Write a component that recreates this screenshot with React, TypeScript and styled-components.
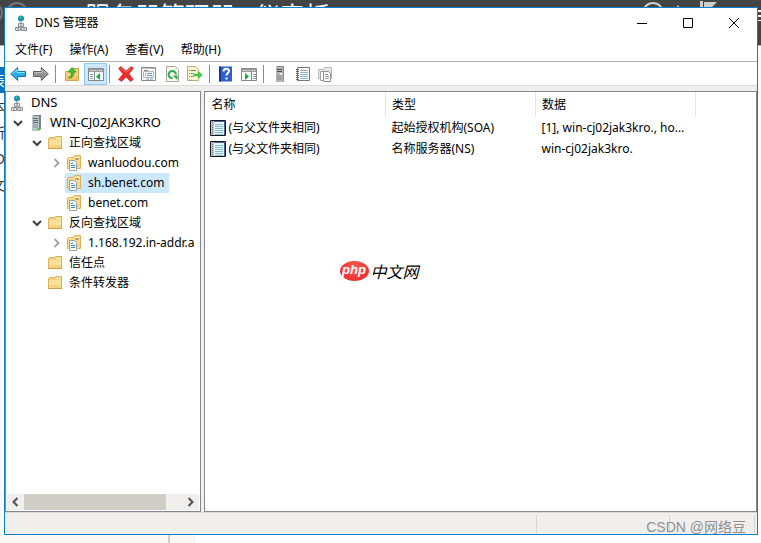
import React from "react";
import styled, { createGlobalStyle, css } from "styled-components";

const GlobalStyle = createGlobalStyle`
  * { box-sizing: border-box; }
  body { margin: 0; background: #fff; overflow: hidden; }
  body, button, table {
    font-family: "Noto Sans", "Noto Sans CJK SC", sans-serif;
    font-size: 12px;
    color: #000;
  }
  button { border: 0; background: none; padding: 0; margin: 0; }
`;

/* ---------- desktop behind the window ---------- */

const Desktop = styled.div`
  position: relative;
  display: flex;
  min-height: 100vh;
  padding: 7px 3px 8px 4px;
`;

const Backdrop = styled.div`
  position: absolute;
  inset: 0;
  display: flex;
  flex-direction: column;
  overflow: hidden;
  background: #fff;
`;

const BackdropHeader = styled.div`
  display: flex;
  align-items: flex-start;
  justify-content: space-between;
  height: 46px;
  flex: none;
  background: #444;
  color: #fff;
  border-bottom: 1px solid #aaa;
`;

const BackdropTitle = styled.div`
  display: flex;
  gap: 56px;
  font-size: 25px;
  line-height: 30px;
  white-space: nowrap;
`;

const BackdropBody = styled.div`
  display: flex;
  flex: 1;
`;

const Rail = styled.div`
  width: 170px;
  padding-top: 21px;
  background: #f9f8f7;
  border-right: 2px solid #d0cdca;
`;

const RailItem = styled.div<{ $active?: boolean }>`
  display: flex;
  justify-content: flex-end;
  align-items: center;
  width: 5px;
  height: 26px;
  overflow: hidden;
  font-size: 14px;
  color: ${(p) => (p.$active ? "#fff" : "#333")};
  background: ${(p) => (p.$active ? "#0a72c0" : "#fff")};
`;

const RailShade = styled.div`
  width: 26px;
  background: #f9f8f7;
`;

/* ---------- window ---------- */

const Window = styled.main`
  position: relative;
  flex: 1;
  min-width: 0;
  display: flex;
  flex-direction: column;
  background: #fff;
  border: 1px solid #0a7fcb;
`;

const TitleBar = styled.header`
  display: flex;
  align-items: center;
  height: 30px;
  padding-left: 8px;
`;

const Title = styled.h1`
  flex: 1;
  margin: 0 0 0 6px;
  font-size: 12px;
  font-weight: 400;
  line-height: 20px;
`;

const CaptionButton = styled.button`
  display: flex;
  align-items: center;
  justify-content: center;
  width: 46px;
  height: 30px;
`;

const MenuBar = styled.nav`
  display: flex;
  gap: 17px;
  height: 24px;
  padding: 0 10px;
  border-bottom: 1px solid #aeaeae;
`;

const MenuButton = styled.button`
  line-height: 23px;
`;

const Toolbar = styled.div`
  display: flex;
  align-items: center;
  height: 24px;
  padding-left: 2px;
  border-bottom: 1px solid #dcdcdc;
`;

const ToolButton = styled.button<{ $pressed?: boolean }>`
  display: flex;
  align-items: center;
  width: 23px;
  height: 22px;
  padding-left: 3px;
  ${(p) =>
    p.$pressed &&
    css`
      background: #cce8ff;
      border: 1px solid #90c8f6;
    `}
`;

const Separator = styled.span`
  width: 1px;
  height: 18px;
  margin: 0 5px 0 2px;
  background: #8c8c8c;
`;

const Body = styled.div`
  flex: 1;
  display: flex;
  gap: 3px;
  min-height: 0;
  padding-top: 5px;
  background: #f0efee;
`;

const Pane = styled.section`
  display: flex;
  flex-direction: column;
  min-width: 0;
  background: #fff;
  border: 1px solid #828790;
`;

const TreePane = styled(Pane)`
  width: 26%;
  flex: none;
`;

const ListPane = styled(Pane)`
  flex: 1;
  position: relative;
`;

/* ---------- tree ---------- */

const Tree = styled.ul`
  flex: 1;
  margin: 0;
  padding: 1px 0 0;
  list-style: none;
  overflow: hidden;
`;

const TreeRow = styled.li<{ $level: number }>`
  display: flex;
  height: 20px;
  padding-left: ${(p) => (p.$level === 0 ? 2 : p.$level * 19 - 15)}px;
`;

const Expander = styled.button`
  display: flex;
  flex: none;
  align-items: center;
  justify-content: center;
  width: 17px;
  padding-right: 2px;
`;

const ExpanderSpace = styled.span`
  flex: none;
  width: 17px;
`;

const Node = styled.button<{ $selected?: boolean }>`
  display: flex;
  align-items: center;
  gap: 6px;
  padding: 0 4px 0 1px;
  white-space: nowrap;
  background: ${(p) => (p.$selected ? "#cce8ff" : "transparent")};
`;

const NodeLabel = styled.span<{ $large: boolean }>`
  font-size: ${(p) => (p.$large ? 13 : 12)}px;
  line-height: ${(p) => (p.$large ? 18 : 20)}px;
  padding-bottom: ${(p) => (p.$large ? 2 : 0)}px;
`;

const ScrollBar = styled.div`
  display: flex;
  height: 16px;
  margin: 0 1px 1px;
  background: #f0efee;
`;

const ScrollButton = styled.button`
  display: flex;
  align-items: center;
  justify-content: center;
  width: 17px;
`;

const ScrollTrack = styled.div`
  flex: 1;
  display: flex;
`;

const ScrollThumb = styled.div`
  width: 90%;
  background: #d0cdc7;
`;

/* ---------- record list ---------- */

const Records = styled.table`
  width: 100%;
  table-layout: fixed;
  border-collapse: collapse;
`;

const HeadCell = styled.th<{ $width?: number }>`
  width: ${(p) => (p.$width ? `${p.$width}px` : "auto")};
  height: 25px;
  padding: 0 6px 1px;
  font-weight: 400;
  text-align: left;
  border-right: ${(p) => (p.$width ? "1px solid #e5e5e5" : "0")};
  &:first-child { padding-left: 7px; }
`;

const Cell = styled.td`
  height: 21px;
  padding: 0 6px;
  line-height: 20px;
  overflow: hidden;
  text-overflow: ellipsis;
  white-space: nowrap;
`;

const NameCell = styled.span`
  display: flex;
  align-items: center;
  gap: 3px;
  margin-left: -1px;
`;

const Logo = styled.div`
  position: absolute;
  left: 135px;
  top: 169px;
  display: flex;
  align-items: center;
  gap: 2px;
`;

const LogoBadge = styled.span`
  width: 29px;
  height: 20px;
  border-radius: 50%;
  background: radial-gradient(ellipse at 50% 30%, #ff5a50, #e8202a);
  color: #fff;
  font: italic bold 13px/18px "Liberation Sans", sans-serif;
  text-align: center;
`;

const LogoText = styled.span`
  font: italic 400 16px/20px "Noto Sans CJK SC", sans-serif;
`;

/* ---------- status bar ---------- */

const StatusBar = styled.footer`
  display: flex;
  height: 22px;
  padding: 2px 2px 1px 0;
  background: #f0efee;
  border-top: 1px solid #d9d7d3;
`;

const StatusCell = styled.span<{ $width?: number }>`
  ${(p) => (p.$width ? `width: ${p.$width}px;` : "flex: 1;")}
  border-right: 1px solid #d5d3ce;
`;

const Watermark = styled.div`
  position: absolute;
  right: 11px;
  bottom: -4px;
  font: 14px/22px "Liberation Sans", "Noto Sans CJK SC", sans-serif;
  color: #8f8f8f;
`;

/* ---------- icons ---------- */

const Glyph = styled.svg`
  display: block;
  flex: none;
`;

const Svg = ({ w = 16, h = 16, children }: { w?: number; h?: number; children: React.ReactNode }) => (
  <Glyph width={w} height={h} viewBox={`0 0 ${w} ${h}`} aria-hidden="true">
    {children}
  </Glyph>
);

const DnsIcon = () => (
  <Svg>
    <circle cx="8" cy="3.500" r="3" fill="#1687c4" />
    <path d="M6 2l2-1 1 2-2 1zM8 5h2v1H8z" fill="#35cf62" />
    <path d="M8 6.500v2" stroke="#777" />
    <path d="M5.500 8.500h5v3h-5zM2.500 12.500h5v3h-5zM8.500 12.500h5v3h-5z" fill="#e3e6e8" stroke="#8b9298" />
    <path d="M4 14h2M10 14h2M7 10h2" stroke="#888" />
  </Svg>
);

const ServerIcon = () => (
  <Svg>
    <path d="M4 1l2-1h7v14l-2 2H4z" fill="#79858b" />
    <path d="M4 1h7v15H4z" fill="#b9c4c8" />
    <path d="M5 3.500h5M5 5.500h5M5 7.500h5" stroke="#5f6b72" />
    <path d="M5 9h5v4H5z" fill="#a2adb2" />
    <path d="M9 13h2v2H9z" fill="#5bdf35" />
  </Svg>
);

const FolderIcon = () => (
  <Svg>
    <path d="M1.500 3.500l1-1h5l1-1h6v12h-13z" fill="#f4d07a" stroke="#dcb15c" />
    <path d="M2 5h12v8H2z" fill="#fae09a" />
    <path d="M2 10h12v3H2z" fill="#f6d383" />
    <path d="M9 3.500h5" stroke="#fff3c8" />
    <path d="M1 13.500h14" stroke="#cfa04a" />
  </Svg>
);

const ZoneIcon = () => (
  <Svg>
    <path d="M1.500 3.500l1-1h5l1-2h6v13h-13z" fill="#f9dc92" stroke="#dcb15c" />
    <path d="M9 2.500h4" stroke="#fff3c8" />
    <path d="M9 4h4" stroke="#946e45" />
    <path d="M10 8h4v5h-4z" fill="#f6d383" />
    <path d="M3.500 5.500h5l2 2v8h-7z" fill="#fff" stroke="#93a2ae" />
    <path d="M5 8.500h2M5 10.500h4M5 12.500h4" stroke="#2a86d0" />
  </Svg>
);

const RecordIcon = () => (
  <Svg>
    <path d="M.5.5h15v15H.5z" fill="#e9f6fc" stroke="#15171f" />
    <path d="M13.500 1v14" stroke="#fff" />
    <path d="M14.500 1v14M4 1.500h11" stroke="#4a5f9c" />
    <path d="M1 1h3v14H1z" fill="#c4c4c4" />
    <path d="M2.500 1v14" stroke="#7a7a7a" strokeDasharray="1 1" />
    <path d="M5 4.500h8M5 6.500h8M5 8.500h8M5 10.500h8M5 12.500h8M5 14.500h8" stroke="#7fb9d0" />
  </Svg>
);

const BackIcon = () => (
  <Svg>
    <path d="M.7 8l7-6.500v4h7.800v5H7.700v4z" fill="#28aeea" stroke="#1b6fa5" />
    <path d="M2.500 7.500l4.500-4v3h7.500" fill="none" stroke="#8fe0fb" />
  </Svg>
);

const ForwardIcon = () => (
  <Svg>
    <path d="M15.300 8l-7-6.500v4H.5v5h7.800v4z" fill="#939393" stroke="#5f5f5f" />
    <path d="M1.500 6.500H9v-3l4.500 4" fill="none" stroke="#c2c2c2" />
  </Svg>
);

const UpFolderIcon = () => (
  <Svg>
    <path d="M1.500 5.500h6l1-3h6v12h-13z" fill="#f6d27c" stroke="#cfa24e" />
    <path d="M2 10h12v4H2z" fill="#f0c468" />
    <path d="M4.500 12C7 11 7.500 9 7.500 6H4l4-4.500L12 6h-2c0 4-2 6-5.500 6z" fill="#3cc433" stroke="#1e8f22" strokeWidth=".7" />
  </Svg>
);

const PanelIcon = ({ right }: { right?: boolean }) => (
  <Svg w={17}>
    <path d="M.5 2.500h15v12H.5z" fill="#fff" stroke="#888" />
    <path d="M1 3h14v3H1z" fill="#9c9c9c" />
    <path d="M2 4.500h7" stroke="#c9c9c9" />
    <path d="M11 4.500h1M13 4.500h1" stroke="#fff" />
    <path d={right ? "M10.500 6v8" : "M6.500 6v8"} stroke="#888" />
    <path d={right ? "M12 8.500h3M12 10.500h3M12 12.500h3" : "M2 8.500h3M2 10.500h3M2 12.500h3"} stroke="#7c9aaa" />
    <path d={right ? "M4 7l4 3.500L4 14z" : "M12 7l-4 3.500 4 3.500z"} fill="#12ae3c" />
  </Svg>
);

const DeleteIcon = () => (
  <Svg>
    <path d="M.5 2.500L3 .5l5 4.500L13 .5l2.500 1.500L11 8l4.500 5.500-3 2L8 11l-4.500 4.500-3-2L5 8z" fill="#ee2b26" stroke="#c41a18" strokeWidth=".5" />
    <path d="M3 2l5 4.500L13 2" fill="none" stroke="#ff7a6e" />
  </Svg>
);

const PropertiesIcon = () => (
  <Svg>
    <path d="M.5 1.500h14v13H.5z" fill="#fff" stroke="#8a8a8a" />
    <path d="M1 2.500h13" stroke="#b9c5cd" />
    <path d="M2.500 5.500h10v6h-10z" fill="#f5f5f5" stroke="#a9b6bf" />
    <path d="M3 4.500h4" stroke="#888" />
    <path d="M4 7.500h1M6 7.500h5M4 9.500h1M6 9.500h5M5 13h3M9 13h3" stroke="#789baf" />
  </Svg>
);

const RefreshIcon = () => (
  <Svg>
    <path d="M2.500.5h9l3 3v12h-12z" fill="#fbf8ed" stroke="#a9a69d" />
    <path d="M8.500 12.300a3.700 3.700 0 1 1 3.500-3.800" fill="none" stroke="#23b047" strokeWidth="2" />
    <path d="M8.500 9.500h5v4.500z" fill="#23b047" />
  </Svg>
);

const ExportIcon = () => (
  <Svg>
    <path d="M.5.5h8l3 3v11H.5z" fill="#fff6cf" stroke="#b8ac7f" />
    <path d="M2 4.500h1M4 4.500h5M2 7.500h1M4 7.500h4M2 10.500h1M4 10.500h4" stroke="#777" />
    <path d="M6 7.500h4.500V4l5.500 5-5.500 5v-3.500H6z" fill="#4ac844" stroke="#fff" strokeWidth=".5" />
  </Svg>
);

const HelpIcon = () => (
  <Svg>
    <path d="M1 .500h13v15H1z" fill="#2c5fd0" />
    <path d="M1 .500h2v15H1z" fill="#1b388c" />
    <path d="M5.500 5.500c0-3.500 5.500-3.500 5.500-.5 0 2-2.500 2-2.500 4.500M8.500 11.500v2" fill="none" stroke="#fff" strokeWidth="2" />
  </Svg>
);

const TowerIcon = () => (
  <Svg>
    <path d="M4 1l1-1h7v15l-1 1H4z" fill="#8a8a8a" />
    <path d="M4 1h7v15H4z" fill="#b4b4b4" />
    <path d="M5 3.500h5M5 5.500h5" stroke="#4c4c4c" />
    <path d="M5 9h5v5H5z" fill="#9f9f9f" />
    <path d="M8 7h2v2H8z" fill="#eee" />
  </Svg>
);

const NotebookIcon = () => (
  <Svg>
    <path d="M2.500 1.500h12v13h-12z" fill="#fff" stroke="#777" />
    <path d="M5 4.500h8M5 6.500h8M5 8.500h8M5 10.500h8M5 12.500h8" stroke="#86b0c5" />
    <path d="M1 3.500h3M1 5.500h3M1 7.500h3M1 9.500h3M1 11.500h3M1 13.500h3" stroke="#666" />
  </Svg>
);

const CopiesIcon = () => (
  <Svg>
    <path d="M.5 3.500h5l1-2h7v11H.5z" fill="#e6e6e6" stroke="#b9b9b9" />
    <path d="M2.500 5.500h6v9h-6z" fill="#fff" stroke="#a0a0a0" />
    <path d="M5.500 5.500h5l2 2v8h-7z" fill="#fff" stroke="#8e8e8e" />
    <path d="M7 8.500h3M7 10.500h4M7 12.500h4" stroke="#999" />
  </Svg>
);

const Chevron = ({ dir, color = "#404040" }: { dir: "down" | "right" | "left"; color?: string }) => (
  <Svg w={10} h={10}>
    <path
      d={dir === "down" ? "M1 3l4 4 4-4" : dir === "right" ? "M3.500 1l4 4-4 4" : "M6.500 1l-4 4 4 4"}
      fill="none"
      stroke={color}
      strokeWidth="2"
    />
  </Svg>
);

/* ---------- data ---------- */

type TreeItem = {
  label: string;
  level: number;
  icon: React.ReactNode;
  state?: "open" | "closed";
  selected?: boolean;
};

const tree: TreeItem[] = [
  { label: "DNS", level: 0, icon: <DnsIcon /> },
  { label: "WIN-CJ02JAK3KRO", level: 1, icon: <ServerIcon />, state: "open" },
  { label: "正向查找区域", level: 2, icon: <FolderIcon />, state: "open" },
  { label: "wanluodou.com", level: 3, icon: <ZoneIcon />, state: "closed" },
  { label: "sh.benet.com", level: 3, icon: <ZoneIcon />, selected: true },
  { label: "benet.com", level: 3, icon: <ZoneIcon /> },
  { label: "反向查找区域", level: 2, icon: <FolderIcon />, state: "open" },
  { label: "1.168.192.in-addr.a", level: 3, icon: <ZoneIcon />, state: "closed" },
  { label: "信任点", level: 2, icon: <FolderIcon /> },
  { label: "条件转发器", level: 2, icon: <FolderIcon /> },
];

const records = [
  { name: "(与父文件夹相同)", type: "起始授权机构(SOA)", data: "[1], win-cj02jak3kro., hostmaster." },
  { name: "(与父文件夹相同)", type: "名称服务器(NS)", data: "win-cj02jak3kro." },
];

const tools: ({ name: string; icon: React.ReactNode; pressed?: boolean } | null)[] = [
  { name: "后退", icon: <BackIcon /> },
  { name: "前进", icon: <ForwardIcon /> },
  null,
  { name: "向上一级", icon: <UpFolderIcon /> },
  { name: "显示/隐藏控制台树", icon: <PanelIcon />, pressed: true },
  null,
  { name: "删除", icon: <DeleteIcon /> },
  { name: "属性", icon: <PropertiesIcon /> },
  { name: "刷新", icon: <RefreshIcon /> },
  { name: "导出列表", icon: <ExportIcon /> },
  null,
  { name: "帮助", icon: <HelpIcon /> },
  { name: "显示/隐藏操作窗格", icon: <PanelIcon right /> },
  null,
  { name: "新建服务器", icon: <TowerIcon /> },
  { name: "筛选器", icon: <NotebookIcon /> },
  { name: "新建区域", icon: <CopiesIcon /> },
];

export default function App() {
  return (
    <>
      <GlobalStyle />
      <Desktop>
        <Backdrop aria-hidden="true">
          <BackdropHeader>
            <BackdropTitle>
              <Glyph width="29" height="24" viewBox="0 0 29 24">
                <circle cx="-8" cy="13" r="10" fill="none" stroke="#777" strokeWidth="2" />
                <circle cx="17" cy="13" r="10" fill="none" stroke="#777" strokeWidth="2" />
              </Glyph>
              <span>服务器管理器 · 仪表板</span>
            </BackdropTitle>
            <Glyph width="121" height="24" viewBox="0 0 121 24">
              <circle cx="13" cy="13" r="10" fill="none" stroke="#d0cdc7" strokeWidth="2" />
              <path d="M36 8l2-3 2 3zM60 1h3v20h-3zM64 2h13l-8 8h-5z" fill="#d0cdc7" />
              <path d="M118 10h3v2h-3zM118 15h3v2h-3zM118 20h3v1h-3z" fill="#fff" />
            </Glyph>
          </BackdropHeader>
          <BackdropBody>
            <Rail>
              <RailItem $active>表</RailItem>
              <RailItem>本</RailItem>
              <RailItem>所</RailItem>
              <RailItem>D</RailItem>
              <RailItem>文</RailItem>
            </Rail>
            <RailShade />
          </BackdropBody>
        </Backdrop>

        <Window>
          <TitleBar>
            <DnsIcon />
            <Title>DNS 管理器</Title>
            <CaptionButton aria-label="最小化">
              <Svg w={12} h={12}><path d="M1 6.500h10" stroke="#000" /></Svg>
            </CaptionButton>
            <CaptionButton aria-label="最大化">
              <Svg w={12} h={12}><path d="M1.500 1.500h9v9h-9z" fill="none" stroke="#000" /></Svg>
            </CaptionButton>
            <CaptionButton aria-label="关闭">
              <Svg w={12} h={12}><path d="M1 1l10 10M11 1L1 11" stroke="#000" /></Svg>
            </CaptionButton>
          </TitleBar>

          <MenuBar>
            {["文件(F)", "操作(A)", "查看(V)", "帮助(H)"].map((m) => (
              <MenuButton key={m}>{m}</MenuButton>
            ))}
          </MenuBar>

          <Toolbar role="toolbar">
            {tools.map((t, i) =>
              t ? (
                <ToolButton key={i} aria-label={t.name} aria-pressed={t.pressed} $pressed={t.pressed}>
                  {t.icon}
                </ToolButton>
              ) : (
                <Separator key={i} />
              )
            )}
          </Toolbar>

          <Body>
            <TreePane>
              <Tree>
                {tree.map((n) => (
                  <TreeRow key={n.label} $level={n.level}>
                    {n.level > 0 &&
                      (n.state ? (
                        <Expander aria-label={n.state === "open" ? "折叠" : "展开"}>
                          <Chevron
                            dir={n.state === "open" ? "down" : "right"}
                            color={n.state === "open" ? "#404040" : "#a6a6a6"}
                          />
                        </Expander>
                      ) : (
                        <ExpanderSpace />
                      ))}
                    <Node $selected={n.selected}>
                      {n.icon}
                      <NodeLabel $large={n.level < 2}>{n.label}</NodeLabel>
                    </Node>
                  </TreeRow>
                ))}
              </Tree>
              <ScrollBar>
                <ScrollButton aria-label="向左滚动"><Chevron dir="left" color="#505050" /></ScrollButton>
                <ScrollTrack><ScrollThumb /></ScrollTrack>
                <ScrollButton aria-label="向右滚动"><Chevron dir="right" color="#505050" /></ScrollButton>
              </ScrollBar>
            </TreePane>

            <ListPane>
              <Records>
                <thead>
                  <tr>
                    <HeadCell $width={181}>名称</HeadCell>
                    <HeadCell $width={150}>类型</HeadCell>
                    <HeadCell $width={160}>数据</HeadCell>
                    <HeadCell />
                  </tr>
                </thead>
                <tbody>
                  {records.map((r) => (
                    <tr key={r.type}>
                      <Cell>
                        <NameCell>
                          <RecordIcon />
                          {r.name}
                        </NameCell>
                      </Cell>
                      <Cell>{r.type}</Cell>
                      <Cell>{r.data}</Cell>
                      <Cell />
                    </tr>
                  ))}
                </tbody>
              </Records>
              <Logo>
                <LogoBadge>php</LogoBadge>
                <LogoText>中文网</LogoText>
              </Logo>
            </ListPane>
          </Body>

          <StatusBar>
            <StatusCell />
            <StatusCell $width={133} />
            <StatusCell $width={85} />
          </StatusBar>
          <Watermark>CSDN @网络豆</Watermark>
        </Window>
      </Desktop>
    </>
  );
}
